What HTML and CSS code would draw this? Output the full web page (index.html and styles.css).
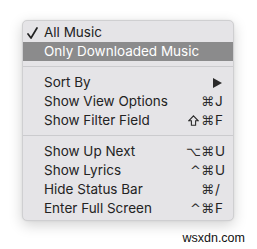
FILE: index.html
```html
<!DOCTYPE html>
<html>
<head>
<meta charset="utf-8">
<link rel="stylesheet" href="styles.css">
</head>
<body>
<div class="menu">
  <div class="item"><span class="check"><svg width="11" height="12" viewBox="0 0 11 12"><path d="M1 7 L4 11 L10 1" fill="none" stroke="#222" stroke-width="1.7" stroke-linecap="round" stroke-linejoin="round"/></svg></span><span class="label">All Music</span></div>
  <div class="item selected"><span class="label">Only Downloaded Music</span></div>
  <div class="sep"></div>
  <div class="item"><span class="label">Sort By</span><span class="arrow"></span></div>
  <div class="item"><span class="label">Show View Options</span><span class="mods">⌘</span><span class="key">J</span></div>
  <div class="item"><span class="label">Show Filter Field</span><span class="mods"><svg class="shift" width="11" height="11" viewBox="0 0 11 11"><path d="M5.5 0.8 L10.2 5.8 L7.6 5.8 L7.6 10.2 L3.4 10.2 L3.4 5.8 L0.8 5.8 Z" fill="none" stroke="#2a2a2a" stroke-width="1.1" stroke-linejoin="miter"/></svg>⌘</span><span class="key">F</span></div>
  <div class="sep"></div>
  <div class="item"><span class="label">Show Up Next</span><span class="mods">⌥⌘</span><span class="key">U</span></div>
  <div class="item"><span class="label">Show Lyrics</span><span class="mods">^⌘</span><span class="key">U</span></div>
  <div class="item"><span class="label">Hide Status Bar</span><span class="mods">⌘</span><span class="key">/</span></div>
  <div class="item"><span class="label">Enter Full Screen</span><span class="mods">^⌘</span><span class="key">F</span></div>
</div>
<div class="watermark">wsxdn.com</div>
</body>
</html>
```
FILE: styles.css
```css
html, body {
  margin: 0;
  padding: 0;
  background: #ffffff;
}
body {
  width: 257px;
  height: 249px;
  overflow: hidden;
  font-family: Inter, "Liberation Sans", sans-serif;
}
.menu {
  margin: 20px 0 0 22px;
  width: 210px;
  padding: 2px 0;
  background: #e5e4e7;
  border: 1px solid #cfcfd1;
  border-radius: 5px;
  box-shadow: 0 4px 14px rgba(0, 0, 0, 0.18), 0 0 2px rgba(0, 0, 0, 0.08);
}
.item {
  height: 19px;
  display: grid;
  grid-template-columns: 21px 1fr auto 10px;
  align-items: center;
  font-size: 13.5px;
  color: #232323;
  padding-right: 8px;
  line-height: 19px;
}
.item.selected {
  background: #8b8b8c;
  color: #ffffff;
}
.check {
  grid-column: 1;
  display: flex;
  justify-content: flex-end;
  padding-right: 6px;
  padding-top: 1px;
}
.label {
  grid-column: 2;
  white-space: nowrap;
}
.mods {
  grid-column: 3;
  display: flex;
  align-items: center;
  justify-content: flex-end;
  gap: 2px;
  font-family: "DejaVu Sans", sans-serif;
  font-size: 13px;
  color: #2a2a2a;
  padding-right: 1px;
}
.key {
  grid-column: 4;
  text-align: left;
}
.arrow {
  grid-column: 4;
  justify-self: end;
  width: 0;
  height: 0;
  margin-right: 3px;
  border-top: 5px solid transparent;
  border-bottom: 5px solid transparent;
  border-left: 9px solid #2a2a2a;
}
.sep {
  height: 1px;
  margin: 5px 0 6px;
  background: #cbcbce;
}
.watermark {
  margin-top: 10px;
  text-align: right;
  padding-right: 12px;
  font-family: "Liberation Sans", sans-serif;
  font-size: 12.5px;
  color: #111111;
}
```
